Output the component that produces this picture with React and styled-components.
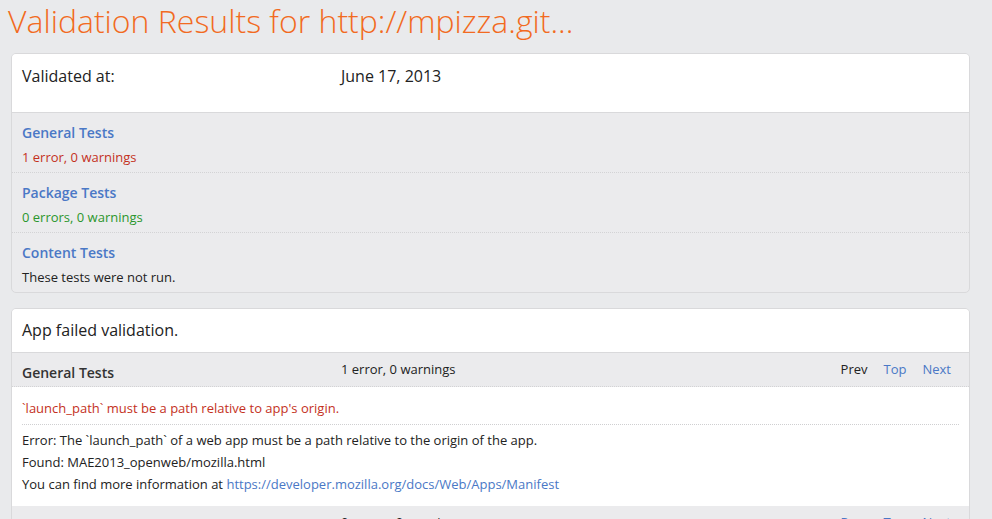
import styled, { createGlobalStyle } from "styled-components";

const GlobalStyle = createGlobalStyle`
  html, body {
    margin: 0;
    padding: 0;
    background: #e9eaec;
    font-family: "Open Sans", "Liberation Sans", sans-serif;
    color: #222;
  }
`;

const tests = [
  { name: "General Tests", status: "1 error, 0 warnings", tone: "error" },
  { name: "Package Tests", status: "0 errors, 0 warnings", tone: "ok" },
  { name: "Content Tests", status: "These tests were not run.", tone: "plain" },
];

function App() {
  return (
    <>
      <GlobalStyle />
      <Page>
        <Title>Validation Results for http://mpizza.git...</Title>

        <Card>
          <CardHeader>
            <Label>Validated at:</Label>
            <Value>June 17, 2013</Value>
          </CardHeader>
          <Summary>
            {tests.map((t) => (
              <SummaryRow key={t.name}>
                <TestLink href="#">{t.name}</TestLink>
                <Status tone={t.tone}>{t.status}</Status>
              </SummaryRow>
            ))}
          </Summary>
        </Card>

        <Card>
          <Verdict>App failed validation.</Verdict>
          <SectionBar>
            <SectionName>General Tests</SectionName>
            <SectionCount>1 error, 0 warnings</SectionCount>
            <Pager>
              <PagerItem>Prev</PagerItem>
              <PagerLink href="#">Top</PagerLink>
              <PagerLink href="#">Next</PagerLink>
            </Pager>
          </SectionBar>
          <Message>
            <MessageTitle>`launch_path` must be a path relative to app's origin.</MessageTitle>
            <MessageBody>
              <p>Error: The `launch_path` of a web app must be a path relative to the origin of the app.</p>
              <p>Found: MAE2013_openweb/mozilla.html</p>
              <p>
                You can find more information at{" "}
                <TextLink href="#">https://developer.mozilla.org/docs/Web/Apps/Manifest</TextLink>
              </p>
            </MessageBody>
          </Message>
          <SectionBar>
            <SectionName>Package Tests</SectionName>
            <SectionCount>0 errors, 0 warnings</SectionCount>
            <Pager>
              <PagerLink href="#">Prev</PagerLink>
              <PagerLink href="#">Top</PagerLink>
              <PagerLink href="#">Next</PagerLink>
            </Pager>
          </SectionBar>
        </Card>
      </Page>
    </>
  );
}

const Page = styled.div`
  padding: 0 22px 40px 11px;
  height: 519px;
  overflow: hidden;
  box-sizing: border-box;
`;

const Title = styled.h1`
  margin: 0 0 0 -3px;
  height: 53px;
  font-size: 32px;
  font-weight: 300;
  line-height: 42px;
  color: #f26a21;
`;

const Card = styled.div`
  background: #ebebed;
  border: 1px solid #d9d9db;
  border-radius: 5px;
  overflow: hidden;
  margin-bottom: 15px;
`;

const CardHeader = styled.div`
  display: grid;
  grid-template-columns: 319px 1fr;
  align-items: start;
  background: #fff;
  height: 59px;
  padding: 11px 10px 0;
  box-sizing: border-box;
  border-bottom: 1px solid #d9d9db;
  font-size: 16px;
`;

const Label = styled.span``;

const Value = styled.span``;

const Summary = styled.div``;

const SummaryRow = styled.div`
  height: 60px;
  box-sizing: border-box;
  padding: 10px 10px 0;
  border-bottom: 1px dotted #d3d3d5;
  display: flex;
  flex-direction: column;
  gap: 6px;

  &:last-child {
    border-bottom: none;
    height: 59px;
  }
`;

const TestLink = styled.a`
  font-size: 14px;
  font-weight: 600;
  color: #4a78c6;
  text-decoration: none;
  line-height: 19px;
`;

const toneColors = { error: "#c4311d", ok: "#2b962c", plain: "#222" };

const Status = styled.span`
  font-size: 13px;
  line-height: 19px;
  color: ${(p) => toneColors[p.tone]};
`;

const Verdict = styled.div`
  background: #fff;
  height: 44px;
  box-sizing: border-box;
  padding: 10px 10px 0;
  font-size: 16px;
  border-bottom: 1px solid #d9d9db;
`;

const SectionBar = styled.div`
  display: grid;
  grid-template-columns: 319px 1fr auto;
  align-items: start;
  height: 34px;
  box-sizing: border-box;
  padding: 0 18px 0 10px;
  border-bottom: 1px dotted #d3d3d5;
  font-size: 13px;
`;

const SectionName = styled.span`
  font-size: 14px;
  font-weight: 600;
  color: #333;
  padding-top: 10px;
`;

const SectionCount = styled.span`
  padding-top: 7px;
`;

const Pager = styled.div`
  display: flex;
  gap: 16px;
  padding-top: 7px;
`;

const PagerItem = styled.span`
  color: #222;
`;

const PagerLink = styled.a`
  color: #4a78c6;
  text-decoration: none;
`;

const Message = styled.div`
  background: #fff;
  padding: 12px 10px 11px;
  font-size: 13px;
`;

const MessageTitle = styled.div`
  color: #c4311d;
  line-height: 19px;
  padding-bottom: 6px;
  border-bottom: 1px dotted #cfcfd1;
`;

const MessageBody = styled.div`
  padding-top: 4px;

  p {
    margin: 0;
    line-height: 22px;
  }
`;

const TextLink = styled.a`
  color: #4a78c6;
  text-decoration: none;
`;

export default App;
